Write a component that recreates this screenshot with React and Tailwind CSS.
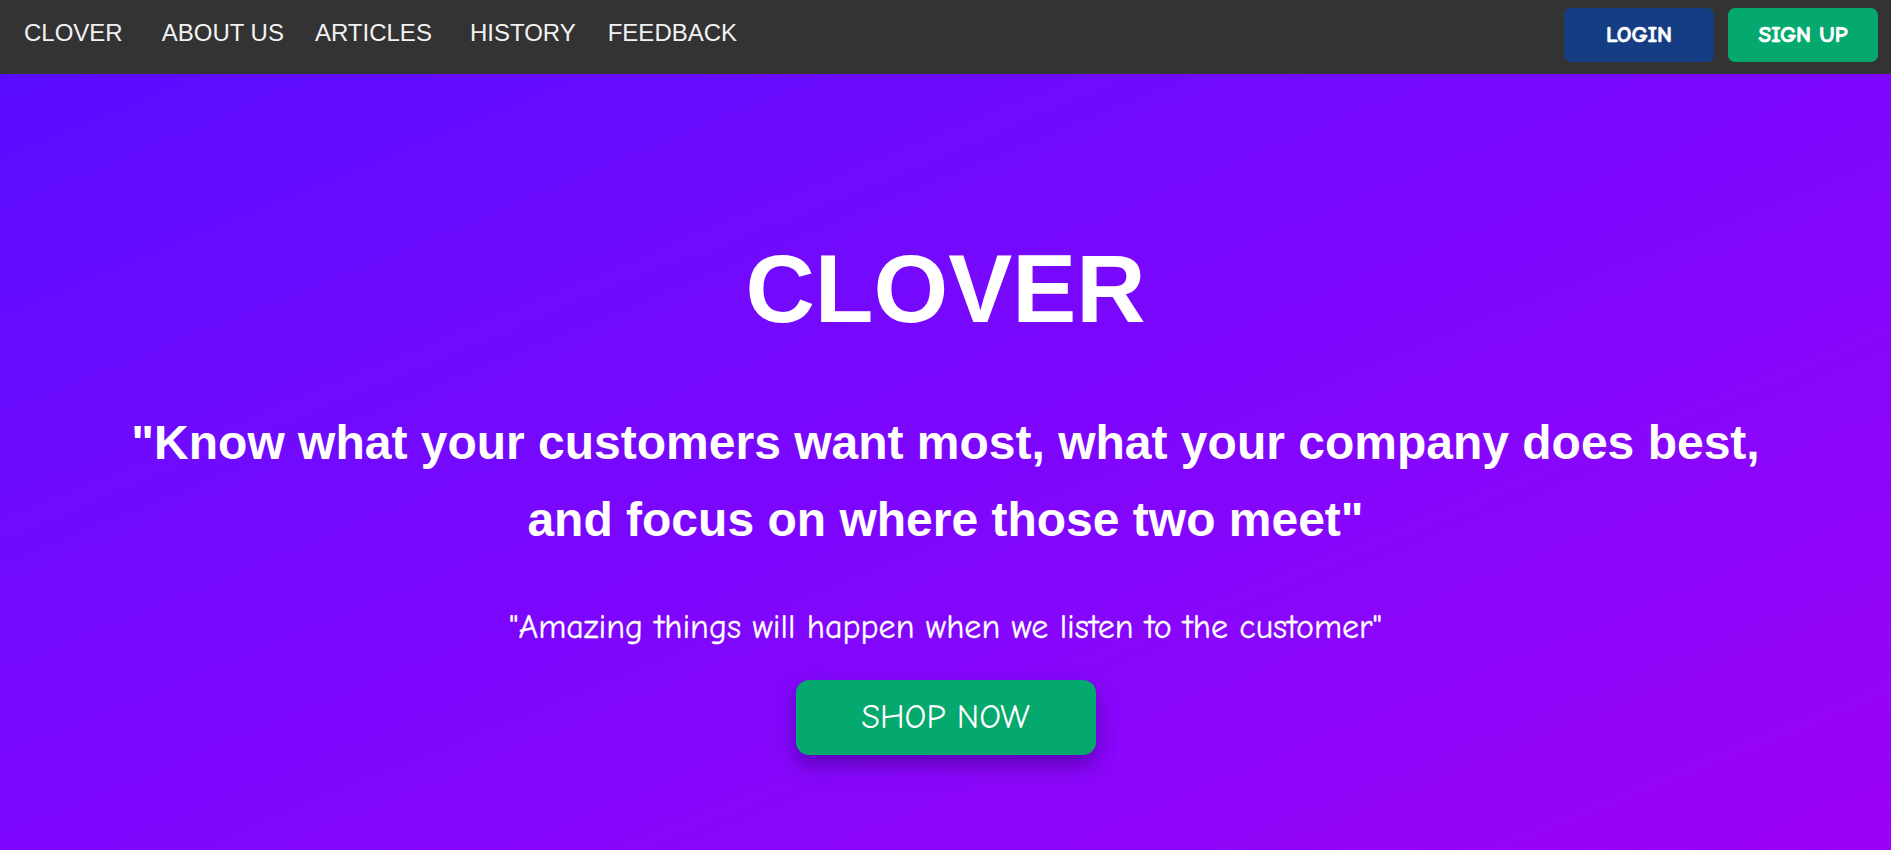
import React from 'react';

const navLinks = [
  { label: 'CLOVER', gap: 'ml-0' },
  { label: 'ABOUT US', gap: 'ml-[39px]' },
  { label: 'ARTICLES', gap: 'ml-[31px]' },
  { label: 'HISTORY', gap: 'ml-[38px]' },
  { label: 'FEEDBACK', gap: 'ml-[32px]' },
];

const comic = "font-['Comic_Sans_MS','Comic_Neue','DejaVu_Sans',sans-serif]";

const App = () => {
  return (
    <div className="min-h-screen flex flex-col font-['Liberation_Sans',Arial,sans-serif]">
      {/* Navbar */}
      <nav className="h-[74px] bg-[#333333] flex justify-between">
        <ul className="flex items-start pt-[19px] pl-[24px]">
          {navLinks.map((link) => (
            <li key={link.label} className={`${link.gap} text-[24px] leading-[28px] text-[#f2f2f2]`}>
              <a href="#">{link.label}</a>
            </li>
          ))}
        </ul>
        <div className="flex items-start pt-[8px] pr-[13px] gap-[14px]">
          <button className={`${comic} w-[150px] h-[54px] rounded-[7px] bg-[#153d84] text-white text-[23px] font-bold [-webkit-text-stroke:0.7px_white]`}>
            LOGIN
          </button>
          <button className={`${comic} w-[150px] h-[54px] rounded-[7px] bg-[#05a86d] text-white text-[23px] font-bold [-webkit-text-stroke:0.7px_white]`}>
            SIGN UP
          </button>
        </div>
      </nav>

      {/* Hero */}
      <section className="flex-1 flex flex-col items-center text-center text-white bg-gradient-to-br from-[#5a0bff] via-[#7d05fd] to-[#9c00f7] pt-[160px] pb-[85px]">
        <h1 className="text-[96px] leading-[110px] font-bold">CLOVER</h1>
        <p className="mt-[61px] text-[48px] leading-[76.8px] font-bold max-w-[1700px]">
          "Know what your customers want most, what your company does best,
          <br />
          and focus on where those two meet"
        </p>
        <p className={`${comic} mt-[48px] text-[34px] leading-[40px] [-webkit-text-stroke:0.3px_white]`}>
          "Amazing things will happen when we listen to the customer"
        </p>
        <button className={`${comic} mt-[33px] w-[300px] h-[75px] rounded-[13px] bg-[#05a86d] text-white text-[34px] shadow-[0_10px_20px_rgba(40,0,100,0.45)]`}>
          SHOP NOW
        </button>
      </section>
    </div>
  );
};

export default App;
